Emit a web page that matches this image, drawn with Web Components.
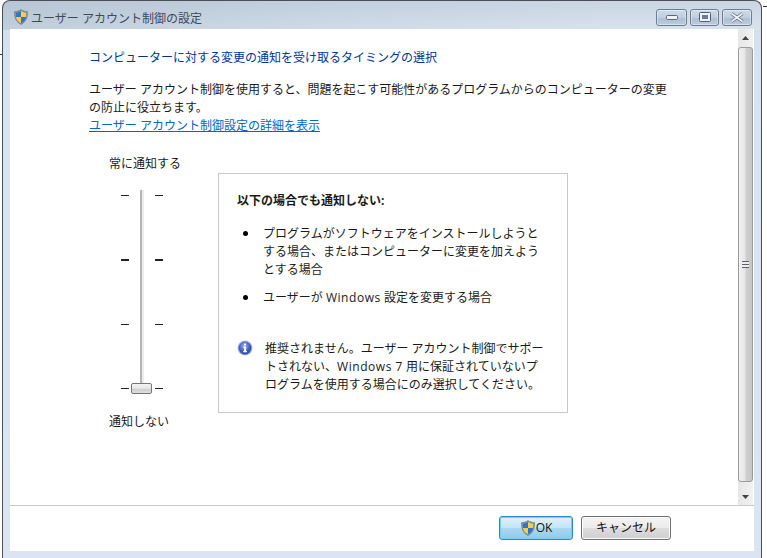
<!DOCTYPE html>
<html lang="ja">
<head>
<meta charset="utf-8">
<title>ユーザー アカウント制御の設定</title>
<style>
  html, body { margin: 0; padding: 0; background: #fff; height: 558px; overflow: hidden; }
  body { font: 12px/18px "Open Sans", "Noto Sans CJK JP", sans-serif; color: #111; }
</style>
</head>
<body>
<uac-window>
  <span slot="title">ユーザー アカウント制御の設定</span>
  <uac-settings></uac-settings>
  <dialog-button slot="footer" primary><shield-icon size="16"></shield-icon>OK</dialog-button>
  <dialog-button slot="footer">キャンセル</dialog-button>
</uac-window>

<script>
const FONT = '"Open Sans", "Noto Sans CJK JP", sans-serif';

class ShieldIcon extends HTMLElement {
  connectedCallback() {
    const size = this.getAttribute('size') || 16;
    this.attachShadow({mode: 'open'}).innerHTML = `
      <style>:host { display: inline-flex; flex: none; } svg { display: block; }</style>
      <svg width="${size}" height="${size}" viewBox="0 0 16 16">
        <path d="M8 .6C6 2 4 2.6 1.6 2.7 1.4 8.6 3 12.800 8 15.400 13 12.800 14.600 8.600 14.400 2.700 12 2.600 10 2 8 .6Z" fill="#8a96a6" stroke="#6f7b8c" stroke-width=".8"/>
        <path d="M8 2C6.400 3 4.800 3.500 3 3.700L3.100 8H8Z" fill="#2f74c9"/>
        <path d="M8 2V8H12.900L13 3.700C11.200 3.500 9.600 3 8 2Z" fill="#f6cf45"/>
        <path d="M3.100 8C3.400 10.800 5 12.600 8 14.100V8Z" fill="#f6cf45"/>
        <path d="M8 8V14.100C11 12.600 12.600 10.800 12.900 8Z" fill="#2f74c9"/>
      </svg>`;
  }
}

class InfoIcon extends HTMLElement {
  constructor() {
    super();
    this.attachShadow({mode: 'open'}).innerHTML = `
      <style>:host { display: block; flex: none; width: 16px; height: 16px; } svg { display: block; }</style>
      <svg width="16" height="16" viewBox="0 0 16 16">
        <defs>
          <radialGradient id="g" cx=".45" cy=".35" r=".7">
            <stop offset="0" stop-color="#9fb4ea"/><stop offset=".6" stop-color="#3f5fc0"/><stop offset="1" stop-color="#27439a"/>
          </radialGradient>
        </defs>
        <circle cx="8" cy="8" r="7.500" fill="#aab6d8"/>
        <circle cx="8" cy="8" r="6.400" fill="url(#g)"/>
        <rect x="7" y="3.400" width="2.100" height="2" rx=".6" fill="#fff"/>
        <path d="M6.300 6.500H9.100V11H10V12.200H6.200V11H7.100V7.700H6.300Z" fill="#fff"/>
      </svg>`;
  }
}

class CaptionButton extends HTMLElement {
  constructor() {
    super();
    this.attachShadow({mode: 'open'}).innerHTML = `
      <style>
        :host {
          display: flex; align-items: center; justify-content: center;
          box-sizing: border-box; height: 17px; width: var(--w, 30px);
          border: 1px solid #6b7d94; border-radius: 3px;
          background: linear-gradient(#cfdbe7, #bfcddd 50%, #aebfd2 52%, #bccbdc);
          box-shadow: inset 0 0 0 1px rgba(255,255,255,.4);
        }
      </style>
      <slot></slot>`;
  }
}

class UacWindow extends HTMLElement {
  constructor() {
    super();
    this.attachShadow({mode: 'open'}).innerHTML = `
      <style>
        :host {
          display: block; width: 767px; height: 558px; box-sizing: border-box; padding-right: 5px; padding-left: 2px;
          background:
            linear-gradient(#333, #333) 0 54px / 2px 1px no-repeat,
            linear-gradient(#333, #333) 763px 6px / 4px 1px no-repeat,
            #fff;
        }
        .frame {
          box-sizing: border-box; height: 558px; display: flex; flex-direction: column;
          border: 1px solid #4a4f57; border-bottom: 0; border-radius: 8px 8px 0 0;
          background:
            linear-gradient(90deg, rgba(170,184,200,.45), rgba(170,184,200,.12) 40%, rgba(255,255,255,.1) 80%) 0 0 / 100% 29px no-repeat,
            linear-gradient(#c4d1df 0, #d3dfeb 29px, #d6e3f1 60px, #dae5f1 100%);
          padding: 0 7px 7px 7px;
        }
        .title { height: 28px; box-sizing: border-box; padding-top: 4px; padding-left: 3px; display: flex; align-items: center; flex: none; }
        .title ::slotted(span) { color: #3f4a58; margin-left: 2px; padding-top: 4px; font: 12px/18px ${FONT}; }
        .caption { margin-left: auto; display: flex; gap: 3px; padding-right: 2px; }
        .client { flex: 1; min-height: 0; display: flex; flex-direction: column; background: #fff; }
        .main { flex: 1; min-height: 0; display: flex; }
        .body { flex: 1; min-width: 0; }
        .footer {
          flex: none; height: 46px; box-sizing: border-box; border-top: 1px solid #c8c8c8;
          display: flex; gap: 8px; align-items: flex-start; padding: 10px 0 0 489px;
        }
      </style>
      <div class="frame">
        <div class="title">
          <shield-icon size="16"></shield-icon>
          <slot name="title"></slot>
          <div class="caption">
            <caption-button style="--w:31px">
              <svg width="12" height="5"><rect x=".5" y=".5" width="11" height="4" rx="1" fill="#eef2f7" stroke="#56677e"/></svg>
            </caption-button>
            <caption-button style="--w:29px">
              <svg width="12" height="10"><rect x=".5" y=".5" width="11" height="9" rx="1" fill="#eef2f7" stroke="#4f5f76"/><rect x="3" y="3" width="6" height="4" fill="#6c7c92"/></svg>
            </caption-button>
            <caption-button style="--w:30px">
              <svg width="16" height="11" viewBox="0 0 16 11"><path d="M2.500 1.500 13.500 9.500M13.500 1.500 2.500 9.500" stroke="#5a6a80" stroke-width="3.400" fill="none"/><path d="M2.500 1.500 13.500 9.500M13.500 1.500 2.500 9.500" stroke="#f2f5f9" stroke-width="1.700" fill="none"/></svg>
            </caption-button>
          </div>
        </div>
        <div class="client">
          <div class="main">
            <div class="body"><slot></slot></div>
            <uac-scrollbar></uac-scrollbar>
          </div>
          <div class="footer"><slot name="footer"></slot></div>
        </div>
      </div>`;
  }
}

class UacScrollbar extends HTMLElement {
  constructor() {
    super();
    this.attachShadow({mode: 'open'}).innerHTML = `
      <style>
        :host {
          display: flex; flex-direction: column; flex: none; width: 15px; height: 100%; margin-right: 1px;
          background: linear-gradient(90deg, #e6e6e6, #f2f2f2);
        }
        .arrow { height: 17px; flex: none; display: flex; align-items: center; justify-content: center; }
        .thumb {
          flex: 1; margin: 1px 0 6px; border: 1px solid #9b9b9b; border-radius: 3px;
          background: linear-gradient(90deg, #f1f1f1, #e6e6e6 45%, #d0d0d0 55%, #c6c6c6);
          display: flex; align-items: center; justify-content: center;
        }
        .grip { width: 7px; height: 7px; background: repeating-linear-gradient(#59606b 0 1px, #eee 1px 3px); }
      </style>
      <div class="arrow"><svg width="7" height="4"><path d="M3.500 0 7 4H0Z" fill="#444"/></svg></div>
      <div class="thumb"><div class="grip"></div></div>
      <div class="arrow"><svg width="7" height="4"><path d="M0 0H7L3.500 4Z" fill="#444"/></svg></div>`;
  }
}

class UacSlider extends HTMLElement {
  constructor() {
    super();
    const tick = `<div class="row"><i></i><i></i></div>`;
    this.attachShadow({mode: 'open'}).innerHTML = `
      <style>
        :host { display: block; position: relative; width: 42px; height: 204px; }
        .track {
          position: absolute; left: 19px; top: 0; bottom: 10px; width: 4px; box-sizing: border-box;
          background: #ececec; border-left: 2px solid #b5b5b5;
        }
        .ticks { padding-top: 5px; box-sizing: border-box; display: flex; flex-direction: column; justify-content: space-between; height: 199px; }
        .row { display: flex; justify-content: space-between; height: 1px; }
        .row.bold { height: 2px; }
        i { display: block; width: 8px; background: #222; }
        .thumb {
          position: absolute; left: 10px; top: 193px; width: 21px; height: 11px; box-sizing: border-box;
          border: 1px solid #777; border-radius: 2px;
          background: linear-gradient(#f4f4f4, #e4e4e4 50%, #cfcfcf 55%, #dedede);
        }
      </style>
      <div class="track"></div>
      <div class="ticks">
        ${tick}
        <div class="row bold"><i></i><i></i></div>
        ${tick}
        ${tick}
      </div>
      <div class="thumb"></div>`;
  }
}

class InfoPanel extends HTMLElement {
  constructor() {
    super();
    this.attachShadow({mode: 'open'}).innerHTML = `
      <style>
        :host {
          display: block; box-sizing: border-box; width: 350px; height: 240px;
          border: 1px solid #c9c9c9; padding: 18px 18px 0 18px;
          font: 12px/18px ${FONT}; color: #1a1a1a;
        }
        h2 { font: bold 12px/18px ${FONT}; margin: 0 0 15px; }
        ul { list-style: none; margin: 0; padding: 0 0 0 26px; }
        li { position: relative; margin-bottom: 10px; }
        li:first-child { width: 278px; }
        li::before { content: ""; position: absolute; left: -20px; top: 6px; width: 5px; height: 5px; border-radius: 50%; background: #000; }
        .note { display: flex; gap: 12px; margin-top: 33px; }
        .note div { white-space: nowrap; }
        .latin { letter-spacing: .55px; }
      </style>
      <h2>以下の場合でも通知しない:</h2>
      <ul>
        <li>プログラムがソフトウェアをインストールしようとする場合、またはコンピューターに変更を加えようとする場合</li>
        <li>ユーザーが <span class="latin">Windows</span> 設定を変更する場合</li>
      </ul>
      <div class="note">
        <info-icon></info-icon>
        <section>
          <div>推奨されません。ユーザー アカウント制御でサポー</div>
          <div>トされない、<span class="latin">Windows 7</span> 用に保証されていないプ</div>
          <div>ログラムを使用する場合にのみ選択してください。</div>
        </section>
      </div>`;
  }
}

class UacSettings extends HTMLElement {
  constructor() {
    super();
    this.attachShadow({mode: 'open'}).innerHTML = `
      <style>
        :host { display: block; padding: 20px 0 0 79px; font: 12px/18px ${FONT}; color: #1a1a1a; }
        h1 { font: 12px/18px ${FONT}; color: #003399; margin: 0 0 14px; }
        p { margin: 0; width: 582px; }
        a { color: #0066cc; text-decoration: underline; display: block; line-height: 17px; }
        .row { display: flex; margin-top: 20px; }
        .level { width: 129px; flex: none; padding-left: 20px; padding-top: 1px; box-sizing: border-box; }
        .level .top { margin-bottom: 17px; }
        .level uac-slider { margin-left: 12px; }
        .level .bottom { margin-top: 19px; }
        info-panel { margin-top: 19px; }
      </style>
      <h1>コンピューターに対する変更の通知を受け取るタイミングの選択</h1>
      <p>ユーザー アカウント制御を使用すると、問題を起こす可能性があるプログラムからのコンピューターの変更の防止に役立ちます。</p>
      <a>ユーザー アカウント制御設定の詳細を表示</a>
      <div class="row">
        <div class="level">
          <div class="top">常に通知する</div>
          <uac-slider></uac-slider>
          <div class="bottom">通知しない</div>
        </div>
        <info-panel></info-panel>
      </div>`;
  }
}

class DialogButton extends HTMLElement {
  constructor() {
    super();
    this.attachShadow({mode: 'open'}).innerHTML = `
      <style>
        :host {
          display: flex; align-items: center; justify-content: center; gap: 0;
          box-sizing: border-box; width: 90px; height: 24px;
          border: 1px solid #707070; border-radius: 3px;
          background: linear-gradient(#f4f4f4, #ebebeb 48%, #dcdcdc 52%, #cfcfcf);
          box-shadow: inset 0 0 0 1px #fbfbfb;
          font: 12px/18px ${FONT}; color: #111;
        }
        :host([primary]) {
          width: 74px; border: 1px solid #2c8ec4;
          background: linear-gradient(#dff2fb, #c4e5f6 48%, #a8d8f2 52%, #8fcbec);
          box-shadow: inset 0 0 0 1px #6fd0f2;
        }
      </style>
      <slot></slot>`;
  }
}

customElements.define('shield-icon', ShieldIcon);
customElements.define('info-icon', InfoIcon);
customElements.define('caption-button', CaptionButton);
customElements.define('uac-scrollbar', UacScrollbar);
customElements.define('uac-slider', UacSlider);
customElements.define('info-panel', InfoPanel);
customElements.define('uac-settings', UacSettings);
customElements.define('dialog-button', DialogButton);
customElements.define('uac-window', UacWindow);
</script>
</body>
</html>
